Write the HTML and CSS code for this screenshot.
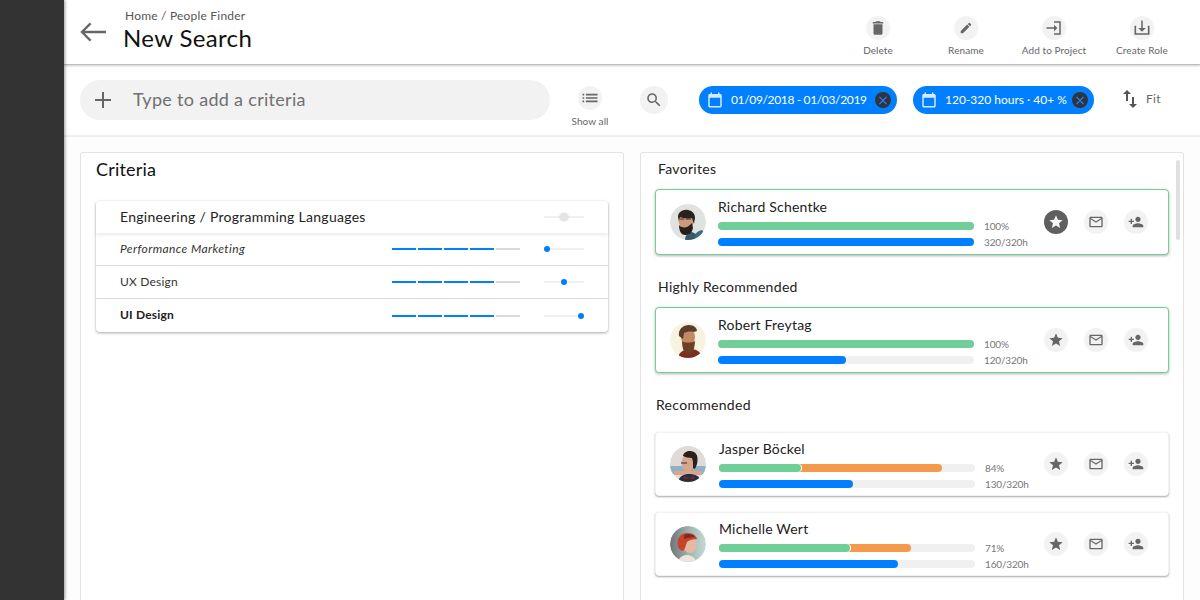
FILE: index.html
```html
<!DOCTYPE html>
<html lang="en">
<head>
<meta charset="utf-8">
<title>New Search</title>
<link rel="stylesheet" href="styles.css">
</head>
<body>
<svg class="defs" aria-hidden="true">
  <defs>
    <linearGradient id="mbg" x1="0" x2="1" y1="0" y2="0"><stop offset="0" stop-color="#6e7476"/><stop offset=".55" stop-color="#a3b5b3"/><stop offset="1" stop-color="#c4dcd5"/></linearGradient>
  </defs>
  <symbol id="i-delete" viewBox="0 0 24 24"><path d="M6 19c0 1.1.9 2 2 2h8c1.1 0 2-.9 2-2V7H6v12zM19 4h-3.5l-1-1h-5l-1 1H5v2h14V4z"/></symbol>
  <symbol id="i-edit" viewBox="0 0 24 24"><path d="M3 17.25V21h3.75L17.81 9.94l-3.75-3.75L3 17.25zM20.71 7.04c.39-.39.39-1.02 0-1.41l-2.34-2.34c-.39-.39-1.02-.39-1.41 0l-1.83 1.83 3.75 3.75 1.83-1.83z"/></symbol>
  <symbol id="i-project" viewBox="0 0 24 24"><path d="M2 11h10V7.500l4.500 4.500-4.500 4.500V13H2zM12 3h9v18h-9v-2h7V5h-7z"/></symbol>
  <symbol id="i-role" viewBox="0 0 24 24"><path d="M11 2h2v10h4l-5 5-5-5h4zM2 9h2.200v10h15.600V9H22v12H2z"/></symbol>
  <symbol id="i-list" viewBox="0 0 24 24"><path d="M3 13h2v-2H3v2zm0 4h2v-2H3v2zm0-8h2V7H3v2zm4 4h14v-2H7v2zm0 4h14v-2H7v2zM7 7v2h14V7H7z"/></symbol>
  <symbol id="i-search" viewBox="0 0 24 24"><path d="M15.5 14h-.79l-.28-.27C15.41 12.59 16 11.11 16 9.5 16 5.91 13.09 3 9.5 3S3 5.91 3 9.5 5.91 16 9.5 16c1.61 0 3.09-.59 4.23-1.57l.27.28v.79l5 4.99L20.49 19l-4.99-5zm-6 0C7.01 14 5 11.99 5 9.5S7.01 5 9.5 5 14 7.01 14 9.5 11.99 14 9.5 14z"/></symbol>
  <symbol id="i-cal" viewBox="0 0 24 24"><path d="M19 4h-1V2h-2v2H8V2H6v2H5c-1.1 0-2 .9-2 2v14c0 1.1.9 2 2 2h14c1.1 0 2-.9 2-2V6c0-1.1-.9-2-2-2zm0 16H5V9h14v11z"/></symbol>
  <symbol id="i-swap" viewBox="0 0 24 24"><path d="M16 17.01V10h-2v7.01h-3L15 21l4-3.99h-3zM9 3L5 6.99h3V14h2V6.99h3L9 3z"/></symbol>
  <symbol id="i-star" viewBox="0 0 24 24"><path d="M12 17.27L18.18 21l-1.64-7.03L22 9.24l-7.19-.61L12 2 9.19 8.63 2 9.24l5.46 4.73L5.82 21z"/></symbol>
  <symbol id="i-mail" viewBox="0 0 24 24"><path d="M20 4H4c-1.1 0-1.99.9-1.99 2L2 18c0 1.1.9 2 2 2h16c1.1 0 2-.9 2-2V6c0-1.1-.9-2-2-2zm0 14H4V8l8 5 8-5v10zm-8-7L4 6h16l-8 5z"/></symbol>
  <symbol id="i-person" viewBox="0 0 24 24"><path d="M15 12c2.21 0 4-1.79 4-4s-1.79-4-4-4-4 1.79-4 4 1.79 4 4 4zm-9-2V7H4v3H1v2h3v3h2v-3h3v-2H6zm9 4c-2.67 0-8 1.34-8 4v2h16v-2c0-2.66-5.33-4-8-4z"/></symbol>
  <symbol id="a-richard" viewBox="0 0 36 36">
    <circle cx="18" cy="18" r="18" fill="#dfe3e0"/>
    <path d="M24 36c0-6 3-9 8-10 2 2 3 4 2 5-3 3-6 5-10 5z" fill="#3f6c80"/>
    <path d="M15 36c0-4 2-7 7-8l4 2-2 6z" fill="#355a6c"/>
    <ellipse cx="16" cy="17" rx="7.500" ry="9" fill="#c99a7e" transform="rotate(-12 16 17)"/>
    <path d="M9 21c1 2 5 3 8 2 2-1 4-3 5-4l1 5c-1 5-4 7-8 7-3 0-6-3-6-10z" fill="#2a1e19"/>
    <path d="M8 13C8 8 13 5 18 6s7 4 7 8l-1 6-2-6c-4 1-10 0-12-1l-1 4z" fill="#2c211c"/>
    <path d="M10 15h4.500M16 15h5" stroke="#333" stroke-width="1" fill="none"/>
  </symbol>
  <symbol id="a-robert" viewBox="0 0 36 36">
    <circle cx="18" cy="18" r="18" fill="#f8f3e0"/>
    <path d="M8 36c1-6 6-9 12-9 7 0 10 3 11 6-4 3-8 4-13 4-4 0-7-1-10-1z" fill="#7d2f20"/>
    <ellipse cx="18" cy="15" rx="7" ry="9" fill="#c08a66"/>
    <path d="M12 19c2 2 10 2 13 0 0 6-2 13-6 13-5 0-7-6-7-13z" fill="#6d4026"/>
    <path d="M9 14C8 7 13 3 19 3c5 0 8 3 8 6l-3 1c-4-1-8 0-10 1l-1 6z" fill="#5b3d2b"/>
  </symbol>
  <symbol id="a-jasper" viewBox="0 0 36 36">
    <circle cx="18" cy="18" r="18" fill="#e0dad8"/>
    <path d="M0 20h36v8H0z" fill="#8fb1c6"/>
    <path d="M4 25h28v4H4z" fill="#dba58c"/>
    <path d="M8 36c1-6 6-8 11-8 6 0 11 2 12 8z" fill="#28313b"/>
    <path d="M14 30l5 2 5-2v3l-5-1-5 1z" fill="#8b2530"/>
    <ellipse cx="18" cy="17" rx="6.500" ry="8.500" fill="#d5a88e"/>
    <path d="M13 10c1-5 7-6 11-4 4 2 4 8 3 12l-2 5-2-1 0-6-1-4c-3 0-7-1-9-2z" fill="#2a1f1a"/>
    <path d="M11 17h6" stroke="#333" stroke-width="1"/>
  </symbol>
  <symbol id="a-michelle" viewBox="0 0 36 36">
    <circle cx="18" cy="18" r="18" fill="url(#mbg)"/>
    <path d="M8 36c1-5 5-7 9-7s8 2 9 7z" fill="#e8e6df"/>
    <ellipse cx="20" cy="19" rx="6.500" ry="8" fill="#e6b9a2"/>
    <path d="M8 21C6 12 11 7 17 7c5 0 9 2 10 6-4 0-8 1-10 3l-2 6-2 3c-2 0-4-2-5-4z" fill="#c9432a"/>
    <path d="M14 9c4-2 9-1 11 2-4 0-8 1-11 2z" fill="#7d2c22"/>
  </symbol>
</svg>

<div class="app">
  <aside class="rail"></aside>
  <div class="main">
    <header class="topbar">
      <svg class="back" viewBox="0 0 28 22"><path d="M27 11H2M11 2l-9 9 9 9" fill="none" stroke="#666" stroke-width="2.400"/></svg>
      <div class="heading">
        <div class="crumb">Home / People Finder</div>
        <h1>New Search</h1>
      </div>
      <nav class="actions">
        <div class="action"><span class="round"><svg class="s18"><use href="#i-delete"/></svg></span><span class="label">Delete</span></div>
        <div class="action"><span class="round"><svg class="s14"><use href="#i-edit"/></svg></span><span class="label">Rename</span></div>
        <div class="action"><span class="round"><svg class="s18"><use href="#i-project"/></svg></span><span class="label">Add to Project</span></div>
        <div class="action"><span class="round"><svg class="s18"><use href="#i-role"/></svg></span><span class="label">Create Role</span></div>
      </nav>
    </header>

    <section class="toolbar">
      <div class="searchbar">
        <span class="plus"></span>
        <span class="placeholder">Type to add a criteria</span>
      </div>
      <div class="showall"><span class="round"><svg class="s20"><use href="#i-list"/></svg></span><span class="label">Show all</span></div>
      <span class="round big"><svg><use href="#i-search"/></svg></span>
      <div class="chip first"><svg class="cal"><use href="#i-cal"/></svg><span class="chip-text">01/09/2018 - 01/03/2019</span><span class="close"></span></div>
      <div class="chip second"><svg class="cal"><use href="#i-cal"/></svg><span class="chip-text">120-320 hours · 40+ %</span><span class="close"></span></div>
      <div class="fit"><svg><use href="#i-swap"/></svg><span>Fit</span></div>
    </section>

    <div class="content">
      <section class="panel">
        <h2>Criteria</h2>
        <div class="crit-card">
          <div class="crit-head">
            <span class="crit-title">Engineering / Programming Languages</span>
            <span class="slider faded"><i class="thumb pale"></i></span>
          </div>
          <div class="crit-row">
            <em class="crit-name wide">Performance Marketing</em>
            <span class="segs"><b></b><b></b><b></b><b></b><b class="off"></b></span>
            <span class="slider"><i class="thumb t1"></i></span>
          </div>
          <div class="crit-row">
            <span class="crit-name">UX Design</span>
            <span class="segs"><b></b><b></b><b></b><b></b><b class="off"></b></span>
            <span class="slider"><i class="thumb t2"></i></span>
          </div>
          <div class="crit-row">
            <strong class="crit-name">UI Design</strong>
            <span class="segs"><b></b><b></b><b></b><b></b><b class="off"></b></span>
            <span class="slider"><i class="thumb t3"></i></span>
          </div>
        </div>
      </section>

      <section class="panel results">
        <div class="scroll"></div>
        <h3 class="h-fav">Favorites</h3>
        <article class="person green">
          <svg class="avatar"><use href="#a-richard"/></svg>
          <div class="info">
            <div class="name">Richard Schentke</div>
            <div class="meter"><div class="track"><i class="fill g" style="width:100%"></i></div><span>100%</span></div>
            <div class="meter"><div class="track"><i class="fill b" style="width:100%"></i></div><span>320/320h</span></div>
          </div>
          <div class="tools">
            <span class="round dark"><svg><use href="#i-star"/></svg></span>
            <span class="round"><svg><use href="#i-mail"/></svg></span>
            <span class="round"><svg><use href="#i-person"/></svg></span>
          </div>
        </article>

        <h3 class="h-high">Highly Recommended</h3>
        <article class="person green">
          <svg class="avatar"><use href="#a-robert"/></svg>
          <div class="info">
            <div class="name">Robert Freytag</div>
            <div class="meter"><div class="track"><i class="fill g" style="width:100%"></i></div><span>100%</span></div>
            <div class="meter"><div class="track"><i class="fill b" style="width:50%"></i></div><span>120/320h</span></div>
          </div>
          <div class="tools">
            <span class="round"><svg><use href="#i-star"/></svg></span>
            <span class="round"><svg><use href="#i-mail"/></svg></span>
            <span class="round"><svg><use href="#i-person"/></svg></span>
          </div>
        </article>

        <h3 class="h-rec">Recommended</h3>
        <article class="person plain">
          <svg class="avatar"><use href="#a-jasper"/></svg>
          <div class="info shift">
            <div class="name">Jasper Böckel</div>
            <div class="meter"><div class="track"><i class="fill o" style="width:87%"></i><i class="fill g top" style="width:32%"></i></div><span>84%</span></div>
            <div class="meter"><div class="track"><i class="fill b" style="width:52.300%"></i></div><span>130/320h</span></div>
          </div>
          <div class="tools">
            <span class="round"><svg><use href="#i-star"/></svg></span>
            <span class="round"><svg><use href="#i-mail"/></svg></span>
            <span class="round"><svg><use href="#i-person"/></svg></span>
          </div>
        </article>
        <article class="person plain">
          <svg class="avatar"><use href="#a-michelle"/></svg>
          <div class="info shift">
            <div class="name">Michelle Wert</div>
            <div class="meter"><div class="track"><i class="fill o" style="width:75%"></i><i class="fill g top" style="width:51.200%"></i></div><span>71%</span></div>
            <div class="meter"><div class="track"><i class="fill b" style="width:70%"></i></div><span>160/320h</span></div>
          </div>
          <div class="tools">
            <span class="round"><svg><use href="#i-star"/></svg></span>
            <span class="round"><svg><use href="#i-mail"/></svg></span>
            <span class="round"><svg><use href="#i-person"/></svg></span>
          </div>
        </article>
      </section>
    </div>
  </div>
</div>
</body>
</html>
```

FILE: styles.css
```css
* { box-sizing: border-box; }
html, body { margin: 0; height: 100%; overflow: hidden; }
body { font-family: "Lato", "Liberation Sans", sans-serif; color: #111; background: #fdfdfd; }
.defs { display: block; width: 0; height: 0; }
.app { display: flex; height: 600px; }
.rail { width: 64px; flex: none; background: #333; box-shadow: 1px 0 3px rgba(0,0,0,.4); position: relative; z-index: 3; }
.main { flex: 1; min-width: 0; display: flex; flex-direction: column; }

.round { width: 24px; height: 24px; border-radius: 50%; background: #f2f2f2; display: flex; align-items: center; justify-content: center; flex: none; }
.round svg { width: 16px; height: 16px; fill: #666; }
.round svg.s14 { width: 14px; height: 14px; }
.round svg.s18 { width: 18px; height: 18px; }
.round svg.s20 { width: 20px; height: 20px; }
.round.dark { background: #5f5f5f; }
.round.dark svg { fill: #f4f4f4; }
.round.big { width: 28px; height: 28px; }
.round.big svg { width: 18px; height: 18px; }
.label { font-size: 10px; line-height: 12px; color: #666; white-space: nowrap; letter-spacing: .08px; }

.topbar { height: 65px; flex: none; display: flex; align-items: flex-start; background: #fff; padding-left: 16px; border-bottom: 1px solid #bdbdbd; box-shadow: 0 1px 2px rgba(0,0,0,.2); position: relative; z-index: 2; }
.back { width: 27px; height: 22px; margin-top: 21px; flex: none; }
.heading { margin-left: 17px; padding-top: 8px; }
.crumb { font-size: 12px; line-height: 15px; color: #555; margin-left: 1px; letter-spacing: .2px; }
h1 { margin: 0 0 0 -1px; font-weight: 400; font-size: 24px; line-height: 30px; color: #111; letter-spacing: .35px; }
.actions { margin-left: auto; margin-right: 14px; display: flex; padding-top: 16px; }
.action { width: 88px; display: flex; flex-direction: column; align-items: center; gap: 4px; }

.toolbar { height: 72px; flex: none; display: flex; align-items: flex-start; background: #fff; padding: 15px 0 0 16px; border-bottom: 2px solid #eee; position: relative; }
.searchbar { width: 470px; height: 40px; border-radius: 20px; background: #f2f2f2; display: flex; align-items: center; padding-left: 15px; flex: none; }
.plus { width: 16px; height: 16px; flex: none; background: linear-gradient(#666,#666) center/16px 2px no-repeat, linear-gradient(#666,#666) center/2px 16px no-repeat; }
.placeholder { margin-left: 22px; padding-bottom: 2px; font-size: 18px; color: #707070; letter-spacing: .3px; }
.showall { width: 40px; margin-left: 20px; margin-top: 6px; display: flex; flex-direction: column; align-items: center; gap: 5px; flex: none; }
.toolbar > .round.big { margin-left: 30px; margin-top: 6px; }
.chip { height: 28px; margin-top: 6px; border-radius: 14px; background: #0080ff; color: #fff; display: flex; align-items: center; font-size: 12px; flex: none; padding-left: 7px; }
.chip.first { width: 198px; margin-left: 31px; letter-spacing: -.35px; }
.chip.second { width: 181px; margin-left: 16px; }
.cal { width: 18px; height: 18px; fill: #d5e9ff; flex: none; margin-right: 7px; }
.chip-text { flex: 1; white-space: nowrap; padding-bottom: 2px; }
.close { width: 16px; height: 16px; border-radius: 50%; margin-right: 6px; flex: none; background: #2f3440; position: relative; }
.close::before, .close::after { content: ""; position: absolute; left: 3px; right: 3px; top: 7.500px; height: 1px; background: #2d8dff; transform: rotate(45deg); }
.close::after { transform: rotate(-45deg); }
.fit { display: flex; align-items: flex-start; margin-left: 24px; margin-top: 7px; font-size: 12px; color: #666; }
.fit svg { width: 24px; height: 24px; fill: #555; }
.fit span { margin-left: 4px; margin-top: 4px; letter-spacing: .3px; }

.content { flex: 1; min-height: 0; display: flex; gap: 16px; padding: 15px 16px 0; overflow: hidden; }
.panel { width: 544px; flex: none; height: 480px; border: 1px solid #e2e2e2; border-radius: 3px 3px 0 0; background: #fff; position: relative; padding: 0 15px; }
h2 { margin: 0; font-weight: 400; font-size: 18px; line-height: 22px; padding-top: 5px; letter-spacing: .2px; }
.crit-card { margin-top: 21px; border-radius: 4px; background: #fff; box-shadow: 0 1px 3px rgba(0,0,0,.35); }
.crit-head { height: 32px; display: flex; align-items: center; justify-content: space-between; padding: 0 24px; font-size: 14px; letter-spacing: .28px; box-shadow: 0 2px 3px rgba(0,0,0,.08); position: relative; color: #222; }
.crit-title { margin-top: -2px; }
.crit-row { height: 33px; display: flex; align-items: center; padding: 0 24px; font-size: 12px; color: #333; border-bottom: 1px solid #d9d9d9; letter-spacing: .2px; }
.crit-row:last-child { border-bottom: 0; }
.crit-row strong { font-weight: 700; color: #222; }
.crit-name { flex: none; width: 272px; margin-top: -2px; }
.crit-name.wide { letter-spacing: .4px; }
.segs { display: flex; gap: 2px; width: 128px; flex: none; }
.segs b { width: 24px; height: 2px; background: #0080ff; }
.segs b.off { background: #d9d9d9; }
.slider { width: 40px; height: 2px; margin-left: 24px; background: #f0f0f0; position: relative; flex: none; }
.crit-head .slider { margin-left: 0; }
.thumb { position: absolute; top: -2px; width: 6px; height: 6px; border-radius: 50%; background: #0080ff; }
.thumb.pale { left: 16px; top: -3px; width: 8px; height: 8px; background: #e4e4e4; box-shadow: 0 0 2px rgba(0,0,0,.2); }
.t1 { left: 0; }
.t2 { left: 17px; }
.t3 { left: 34px; }

.results { padding: 0; }
.scroll { position: absolute; right: 3px; top: 7px; width: 4px; height: 80px; border-radius: 2px; background: #e0e0e0; }
h3 { margin: 0; font-weight: 400; font-size: 14px; line-height: 18px; letter-spacing: .3px; color: #222; }
.h-fav { padding: 7px 0 11px 17px; }
.h-high { padding: 23px 0 11px 17px; }
.h-rec { padding: 23px 0 18px 15px; }
.person { width: 514px; margin-left: 14px; display: flex; align-items: center; border-radius: 4px; background: #fff; padding-left: 14px; }
.green { height: 66px; border: 1px solid #70cf98; box-shadow: 0 1px 3px rgba(0,0,0,.3); }
.plain { height: 64px; margin-bottom: 16px; border: 1px solid #f2f2f2; box-shadow: 0 1px 2px rgba(0,0,0,.35); }
.avatar { width: 36px; height: 36px; flex: none; border-radius: 50%; }
.info { width: 320px; margin-left: 12px; flex: none; }
.info.shift { margin-left: 13px; }
.name { font-size: 14px; line-height: 18px; color: #222; letter-spacing: .2px; margin-bottom: 6px; }
.meter { display: flex; align-items: center; height: 8px; margin-bottom: 8px; font-size: 10px; color: #777; letter-spacing: -.15px; }
.meter:last-child { margin-bottom: 0; }
.meter span { margin-left: 10px; white-space: nowrap; }
.track { width: 256px; height: 8px; flex: none; border-radius: 4px; background: #f0f0f0; position: relative; }
.fill { position: absolute; left: 0; top: 0; height: 8px; border-radius: 4px; }
.fill.g { background: #70cf98; }
.fill.b { background: #0080ff; }
.fill.o { background: #f59a4a; }
.fill.top { box-shadow: 1px 0 0 #fff; }
.tools { margin-left: auto; margin-right: 20px; display: flex; gap: 16px; }
```
